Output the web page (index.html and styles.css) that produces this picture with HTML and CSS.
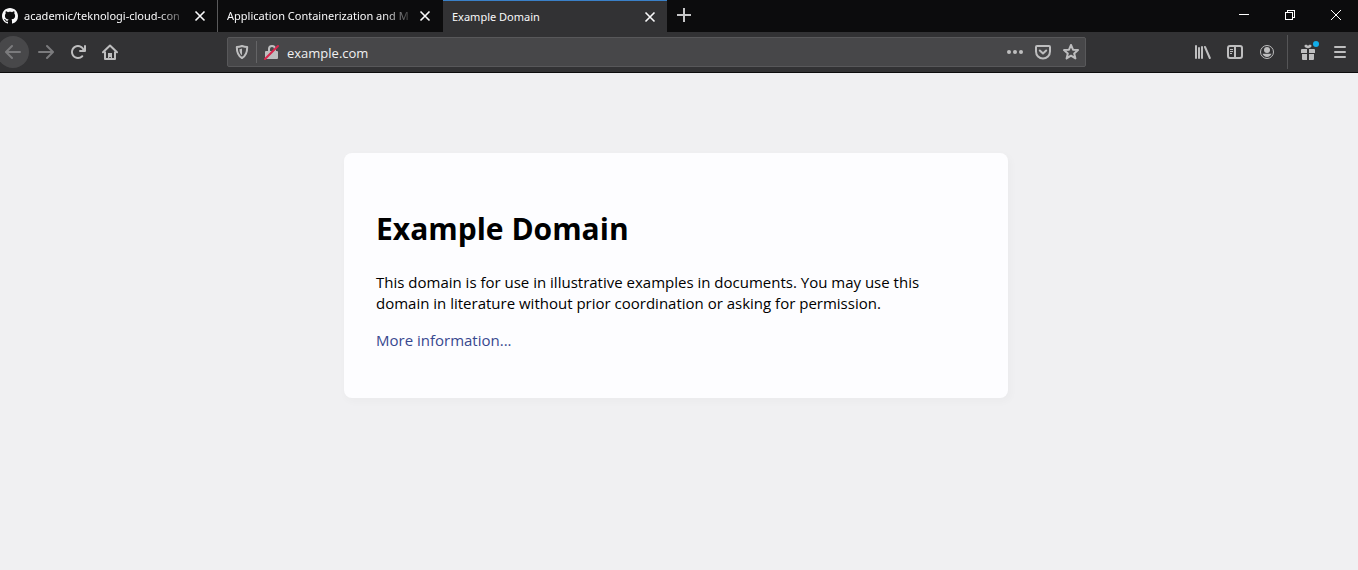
FILE: index.html
```html
<!DOCTYPE html>
<html lang="en">
<head>
<meta charset="utf-8">
<meta name="viewport" content="width=device-width, initial-scale=1">
<title>Example Domain</title>
<link rel="stylesheet" href="styles.css">
</head>
<body>
<header class="browser">
  <div class="tabstrip">
    <div class="tab tab-first">
      <svg class="favicon" viewBox="0 0 16 16" aria-hidden="true"><path d="M8 0C3.58 0 0 3.58 0 8c0 3.54 2.29 6.53 5.47 7.59.4.07.55-.17.55-.38 0-.19-.01-.82-.01-1.49-2.01.37-2.53-.49-2.69-.94-.09-.23-.48-.94-.82-1.13-.28-.15-.68-.52-.01-.53.63-.01 1.08.58 1.23.82.72 1.21 1.87.87 2.33.66.07-.52.28-.87.51-1.07-1.78-.2-3.64-.89-3.64-3.95 0-.87.31-1.59.82-2.15-.08-.2-.36-1.02.08-2.12 0 0 .67-.21 2.2.82.64-.18 1.32-.27 2-.27s1.36.09 2 .27c1.53-1.04 2.2-.82 2.2-.82.44 1.1.16 1.92.08 2.12.51.56.82 1.27.82 2.15 0 3.07-1.87 3.75-3.65 3.95.29.25.54.73.54 1.48 0 1.07-.01 1.93-.01 2.2 0 .21.15.46.55.38A8.01 8.01 0 0 0 16 8c0-4.42-3.58-8-8-8z"/></svg>
      <span class="tab-title faded">academic/teknologi-cloud-con</span>
      <button class="tab-close" aria-label="Close tab"><svg viewBox="0 0 12 12"><path d="M1.500 1.500l9 9M10.500 1.500l-9 9"/></svg></button>
    </div>
    <div class="tab tab-second">
      <span class="tab-title faded">Application Containerization and M</span>
      <button class="tab-close" aria-label="Close tab"><svg viewBox="0 0 12 12"><path d="M1.500 1.500l9 9M10.500 1.500l-9 9"/></svg></button>
    </div>
    <div class="tab tab-active">
      <span class="tab-title">Example Domain</span>
      <button class="tab-close" aria-label="Close tab"><svg viewBox="0 0 12 12"><path d="M1.500 1.500l9 9M10.500 1.500l-9 9"/></svg></button>
    </div>
    <button class="new-tab" aria-label="New tab"><svg viewBox="0 0 14 14"><path d="M7 0v14M0 7h14"/></svg></button>
    <div class="window-controls">
      <button aria-label="Minimize"><svg viewBox="0 0 10 10"><path d="M0 4.500h10"/></svg></button>
      <button aria-label="Restore"><svg viewBox="0 0 10 10"><path d="M.5 2.500h7v7h-7zM2.500 2.500v-2h7v7h-2"/></svg></button>
      <button aria-label="Close window"><svg class="smooth" viewBox="0 0 10 10"><path d="M0 0l10 10M10 0L0 10"/></svg></button>
    </div>
  </div>

  <nav class="toolbar" aria-label="Navigation">
    <div class="nav-buttons">
      <button class="tool back" aria-label="Back"><svg viewBox="0 0 16 16"><path d="M15 7H3.414l4.293-4.293a1 1 0 0 0-1.414-1.414l-6 6a1 1 0 0 0 0 1.414l6 6a1 1 0 0 0 1.414-1.414L3.414 9H15a1 1 0 0 0 0-2z"/></svg></button>
      <button class="tool forward" aria-label="Forward"><svg viewBox="0 0 16 16"><path d="M1 7h11.586L8.293 2.707a1 1 0 0 1 1.414-1.414l6 6a1 1 0 0 1 0 1.414l-6 6a1 1 0 0 1-1.414-1.414L12.586 9H1a1 1 0 0 1 0-2z"/></svg></button>
      <button class="tool" aria-label="Reload"><svg viewBox="0 0 16 16"><path d="M15 1a1 1 0 0 0-1 1v2.418A6.995 6.995 0 1 0 8 15a6.954 6.954 0 0 0 4.950-2.050 1 1 0 0 0-1.414-1.414A5.019 5.019 0 1 1 12.549 6H10a1 1 0 0 0 0 2h5a1 1 0 0 0 1-1V2a1 1 0 0 0-1-1z"/></svg></button>
      <button class="tool" aria-label="Home"><svg class="line" viewBox="0 0 16 16"><path stroke-linecap="round" stroke-linejoin="round" d="M1 8.300L8 1.500l7 6.800"/><path stroke-linejoin="round" d="M3 7.500V15h10V7.500"/><path class="solid" d="M6 15V9h4v6H8.800v-2H7.300v2z"/></svg></button>
    </div>

    <form class="urlbar">
      <button type="button" class="bar-icon" aria-label="Tracking protection"><svg class="line" viewBox="0 0 16 16"><path stroke-linejoin="round" d="M8 2c2 .7 3.500 1 5.200 1 0 5-.8 8.700-5.200 11C3.600 11.700 2.800 8 2.800 3 4.500 3 6 2.700 8 2z"/><path class="solid" d="M8 4.500v6.800C6.200 10 5.500 8 5.400 5.200 6.300 5.100 7.200 4.900 8 4.500z"/></svg></button>
      <span class="bar-rule"></span>
      <button type="button" class="bar-icon" aria-label="Connection is not secure"><svg class="lock" viewBox="0 0 16 16"><path d="M13 7V5a4 4 0 0 0-8 0v2H3a1 1 0 0 0-1 1v6a1 1 0 0 0 1 1h11a1 1 0 0 0 1-1V8a1 1 0 0 0-1-1zM7 5a2 2 0 0 1 4 0v2H7z"/><path class="slash" d="M2 15L15 2"/></svg></button>
      <input class="address" type="text" value="example.com" aria-label="Address" spellcheck="false">
      <button type="button" class="bar-icon" aria-label="Page actions"><svg viewBox="0 0 16 16"><circle cx="2" cy="8" r="2"/><circle cx="8" cy="8" r="2"/><circle cx="14" cy="8" r="2"/></svg></button>
      <button type="button" class="bar-icon" aria-label="Save to Pocket"><svg class="line" viewBox="0 0 16 16"><path d="M2 2h12a1 1 0 0 1 1 1v4.500a7 7 0 0 1-14 0V3a1 1 0 0 1 1-1z"/><path stroke-linecap="round" stroke-linejoin="round" d="M4.800 6.500L8 9.500l3.200-3"/></svg></button>
      <button type="button" class="bar-icon" aria-label="Bookmark this page"><svg class="line" viewBox="0 0 16 16"><path stroke-linejoin="round" d="M8 1l2 4.700 5 .4-3.800 3.300 1.200 5L8 11.700l-4.400 2.700 1.200-5L1 6.100l5-.4z"/></svg></button>
    </form>

    <div class="side-buttons">
      <button class="tool" aria-label="Library"><svg viewBox="0 0 16 16"><rect x="0" y="1" width="2" height="14" rx="1"/><rect x="3" y="3" width="2" height="12" rx="1"/><rect x="6" y="2" width="2" height="13" rx="1"/><path class="stroke" d="M10 3l4.800 11"/></svg></button>
      <button class="tool" aria-label="Sidebars"><svg class="line" viewBox="0 0 16 16"><rect x="1" y="2" width="14" height="12" rx="2"/><path d="M8 2v12"/><path class="thin" d="M3 5.500h3M3 7.500h3M3 9.500h2"/></svg></button>
      <button class="tool" aria-label="Account"><svg viewBox="0 0 16 16"><circle class="ring" cx="8" cy="8" r="6.500"/><circle cx="8" cy="6" r="3"/><path d="M3.500 9.800h9c-.6 2-2.400 3.200-4.500 3.200s-3.900-1.200-4.500-3.200z"/></svg></button>
      <span class="tool-rule"></span>
      <button class="tool whats-new" aria-label="What's new"><svg viewBox="0 0 16 16"><path d="M2 5h5v4H1V6a1 1 0 0 1 1-1zM9 5h5a1 1 0 0 1 1 1v3H9zM2 10h5v6H3a1 1 0 0 1-1-1zM9 10h5v5a1 1 0 0 1-1 1H9zM5 1c1-.6 2.400-.2 3 1 .6-1.200 2-1.600 3-1s.5 2-.6 2.600C9.500 4 8.700 4.200 8 4.200S6.500 4 5.600 3.600C4.500 3 4 1.600 5 1z"/></svg><span class="badge"></span></button>
      <button class="tool" aria-label="Open menu"><svg viewBox="0 0 16 16"><rect x="2" y="2" width="12" height="2" rx="1"/><rect x="2" y="7" width="12" height="2" rx="1"/><rect x="2" y="12" width="12" height="2" rx="1"/></svg></button>
    </div>
  </nav>
</header>

<main class="page">
  <article class="card">
    <h1>Example Domain</h1>
    <p>This domain is for use in illustrative examples in documents. You may use this domain in literature without prior coordination or asking for permission.</p>
    <p><a href="https://www.iana.org/domains/example">More information...</a></p>
  </article>
</main>
</body>
</html>
```

FILE: styles.css
```css
* {
  box-sizing: border-box;
}

body {
  margin: 0;
  min-height: 100vh;
  display: flex;
  flex-direction: column;
  overflow-x: hidden;
  background: #f0f0f2;
  font-family: "Open Sans", "Noto Sans", sans-serif;
}

button {
  display: flex;
  align-items: center;
  justify-content: center;
  padding: 0;
  border: 0;
  background: none;
  color: inherit;
}

svg {
  display: block;
  width: 16px;
  height: 16px;
  fill: currentColor;
}

/* Tab strip */
.tabstrip {
  display: flex;
  height: 32px;
  background: #0c0c0d;
  color: #f9f9fa;
}

.tab {
  display: flex;
  align-items: center;
  flex: 0 1 225px;
  min-width: 0;
  padding: 0 7px 0 9px;
  font-family: "Noto Sans", "Open Sans", sans-serif;
  font-size: 11px;
  line-height: 16px;
}

.tab-first {
  flex-basis: 218px;
  padding-left: 2px;
  border-right: 1px solid #5a5a5b;
}

.tab-second {
  padding-right: 8px;
}

.tab-active {
  flex-basis: 224px;
  border-top: 1px solid #3a80c8;
  background: #323234;
}

.favicon {
  flex: none;
  margin-right: 6px;
}

.tab-title {
  flex: 1;
  min-width: 0;
  overflow: hidden;
  white-space: nowrap;
}

.faded {
  mask-image: linear-gradient(to left, transparent, #000 32px);
}

.tab-close {
  flex: none;
  width: 20px;
  height: 20px;
}

.tab-close svg {
  width: 12px;
  height: 12px;
  stroke: currentColor;
  stroke-width: 1.6;
}

.new-tab {
  width: 34px;
  height: 30px;
  color: #c6c6c7;
}

.new-tab svg {
  width: 14px;
  height: 14px;
  stroke: currentColor;
  stroke-width: 2;
}

.window-controls {
  display: flex;
  margin-left: auto;
}

.window-controls button {
  width: 46px;
  height: 30px;
  padding-left: 2px;
}

.window-controls svg {
  width: 10px;
  height: 10px;
  fill: none;
  stroke: #ffffff;
  shape-rendering: crispEdges;
}

.window-controls .smooth {
  shape-rendering: auto;
}

/* Toolbar */
.toolbar {
  display: flex;
  align-items: center;
  height: 41px;
  padding-right: 2px;
  border-bottom: 1px solid #0c0c0d;
  background: #323234;
  color: #bebebf;
}

.nav-buttons,
.side-buttons {
  display: flex;
  align-items: center;
  flex: none;
}

.nav-buttons {
  margin-left: -2px;
}

.tool {
  width: 32px;
  height: 32px;
}

.back {
  margin-left: -1px;
  margin-right: 1px;
  border-radius: 50%;
  background: #48484a;
}

.back,
.forward {
  color: #7b7b7d;
}

.line {
  fill: none;
  stroke: currentColor;
  stroke-width: 2;
}

.line .solid {
  fill: currentColor;
  stroke: none;
}

.line .thin {
  stroke-width: 1;
}

.stroke {
  stroke: currentColor;
  stroke-width: 2;
  stroke-linecap: round;
}

.ring {
  fill: none;
  stroke: currentColor;
}

.urlbar {
  display: flex;
  align-items: center;
  flex: 1;
  min-width: 0;
  height: 30px;
  margin: 0 101px;
  border: 1px solid #58585a;
  border-radius: 2px;
  background: #474749;
}

.bar-icon {
  flex: none;
  width: 28px;
  height: 28px;
}

.bar-rule {
  width: 1px;
  height: 22px;
  background: #646466;
}

.lock .slash {
  stroke: #d7264c;
  stroke-width: 2;
  stroke-linecap: round;
}

.address {
  flex: 1;
  min-width: 0;
  height: 28px;
  padding: 1px 0 0 2px;
  border: 0;
  outline: 0;
  background: none;
  color: #f0f0f1;
  font: 13px "Open Sans", "Noto Sans", sans-serif;
}

.tool-rule {
  width: 1px;
  height: 34px;
  margin: 0 4px;
  background: #555557;
}

.whats-new {
  position: relative;
}

.badge {
  position: absolute;
  top: 5px;
  right: 5px;
  width: 6px;
  height: 6px;
  border-radius: 50%;
  background: #12aeea;
}

/* Page */
.page {
  flex: 1;
  padding: 80px 6px 80px 0;
}

.card {
  max-width: 664px;
  margin: 0 auto;
  padding: 32px 32px 31px;
  border-radius: 8px;
  background: #fdfdff;
  box-shadow: 2px 3px 7px 2px rgba(0, 0, 0, 0.02);
  color: #000000;
  font-size: 15px;
  line-height: 21px;
}

.card h1 {
  margin: 22px 0 21px;
  font-size: 30px;
  line-height: 44px;
}

.card p {
  margin: 16px 0;
}

.card a {
  color: #38488f;
  text-decoration: none;
}
```
